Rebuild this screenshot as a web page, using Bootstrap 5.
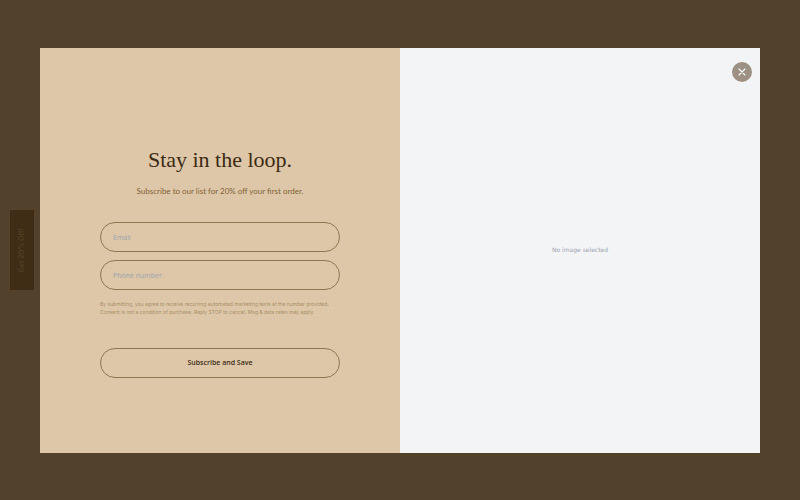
<!DOCTYPE html>
<html lang="en">
<head>
<meta charset="utf-8">
<meta name="viewport" content="width=device-width, initial-scale=1">
<title>Stay in the loop</title>
<link href="https://cdn.jsdelivr.net/npm/bootstrap@5.3.0/dist/css/bootstrap.min.css" rel="stylesheet">
<style>
  body { background: #52412b; color: #3c2a14; font-family: "Open Sans", sans-serif; }
  .signup-panel { width: 90%; aspect-ratio: 16 / 9; }
  .signup-side { background: #ddc7a8; }
  .signup-form { width: 66.667%; padding-top: 22px; }
  .signup-title { font: 500 22px/32px "Liberation Serif", serif; margin-bottom: 9px; }
  .signup-intro { font-family: Lato, sans-serif; font-size: 8px; line-height: 12px; color: #806238; margin-bottom: 25px; }
  .signup-form .pill { height: 30px; border: 1px solid #8b7654; border-radius: 15px; background: transparent; color: #3c2a14; box-shadow: none; }
  .signup-form .form-control { font-size: 7px; line-height: 12px; padding: 0 12px; }
  .signup-form .form-control::placeholder { color: #9ca3af; opacity: 1; }
  .signup-legal { font-family: Inter, sans-serif; font-size: 5px; line-height: 8px; color: #a98f69; margin: 10px 0 32px; }
  .signup-form .btn { font-size: 7px; font-weight: 600; line-height: 12px; }
  .image-side { background: #f3f4f6; color: #9ca3af; font: 6px/12px "DejaVu Sans", sans-serif; }
  .close-round { width: 20px; height: 20px; background: #9c9184; color: #fff; top: 14px; right: 8px; }
  .offer-tab { left: 10px; width: 24px; height: 80px; background: #3f2d16; color: #503d24; font: 700 7px/12px Inter, sans-serif; }
  .offer-tab span { writing-mode: vertical-rl; transform: rotate(180deg); }
</style>
</head>
<body>
<main class="min-vh-100 d-flex align-items-center justify-content-center position-relative">
  <button type="button" class="offer-tab btn rounded-0 border-0 p-0 position-absolute top-50 translate-middle-y d-flex align-items-center justify-content-center"><span>Get 20% Off!</span></button>
  <section class="signup-panel d-flex position-relative" role="dialog" aria-labelledby="signup-title">
    <div class="signup-side w-50 d-flex align-items-center justify-content-center">
      <form class="signup-form d-flex flex-column">
        <h1 id="signup-title" class="signup-title text-center">Stay in the loop.</h1>
        <p class="signup-intro text-center">Subscribe to our list for 20% off your first order.</p>
        <input type="email" class="form-control pill mb-2" placeholder="Email" aria-label="Email">
        <input type="tel" class="form-control pill" placeholder="Phone number" aria-label="Phone number">
        <p class="signup-legal">By submitting, you agree to receive recurring automated marketing texts at the number provided.<br>Consent is not a condition of purchase. Reply STOP to cancel. Msg &amp; data rates may apply.</p>
        <button type="submit" class="btn pill py-0">Subscribe and Save</button>
      </form>
    </div>
    <div class="image-side w-50 d-flex align-items-center justify-content-center">No image selected</div>
    <button type="button" class="close-round btn border-0 rounded-circle p-0 position-absolute d-flex align-items-center justify-content-center" aria-label="Close">
      <svg width="8" height="8" viewBox="0 0 8 8" fill="none" stroke="currentColor" stroke-width="1.1" stroke-linecap="round" aria-hidden="true"><path d="M1 1l6 6M7 1L1 7"/></svg>
    </button>
  </section>
</main>
<script src="https://cdn.jsdelivr.net/npm/bootstrap@5.3.0/dist/js/bootstrap.bundle.min.js"></script>
</body>
</html>
